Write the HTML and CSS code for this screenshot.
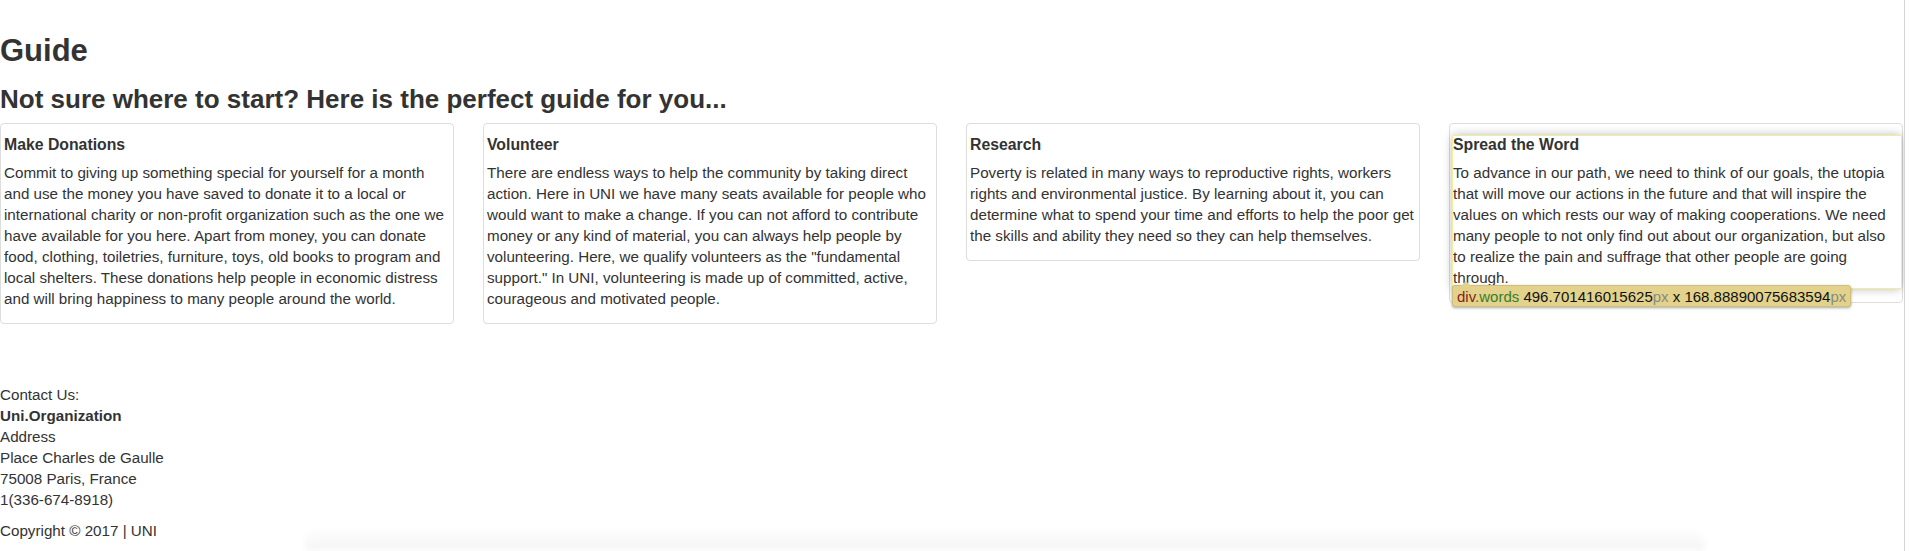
FILE: index.html
```html
<!DOCTYPE html>
<html lang="en">
<head>
<meta charset="utf-8">
<title>Guide</title>
<link rel="stylesheet" href="styles.css">
</head>
<body>
<div class="page">
  <h1 class="title">Guide</h1>
  <h2 class="subtitle">Not sure where to start? Here is the perfect guide for you...</h2>
  <div class="cards">
    <div class="card">
      <div class="words">
        <h5 class="card-title">Make Donations</h5>
        <p class="card-text">Commit to giving up something special for yourself for a month and use the money you have saved to donate it to a local or international charity or non-profit organization such as the one we have available for you here. Apart from money, you can donate food, clothing, toiletries, furniture, toys, old books to program and local shelters. These donations help people in economic distress and will bring happiness to many people around the world.</p>
      </div>
    </div>
    <div class="card">
      <div class="words">
        <h5 class="card-title">Volunteer</h5>
        <p class="card-text">There are endless ways to help the community by taking direct action. Here in UNI we have many seats available for people who would want to make a change. If you can not afford to contribute money or any kind of material, you can always help people by volunteering. Here, we qualify volunteers as the "fundamental support." In UNI, volunteering is made up of committed, active, courageous and motivated people.</p>
      </div>
    </div>
    <div class="card">
      <div class="words">
        <h5 class="card-title">Research</h5>
        <p class="card-text">Poverty is related in many ways to reproductive rights, workers rights and environmental justice. By learning about it, you can determine what to spend your time and efforts to help the poor get the skills and ability they need so they can help themselves.</p>
      </div>
    </div>
    <div class="card card-inspected">
      <div class="words words-highlight">
        <h5 class="card-title">Spread the Word</h5>
        <p class="card-text">To advance in our path, we need to think of our goals, the utopia that will move our actions in the future and that will inspire the values on which rests our way of making cooperations. We need many people to not only find out about our organization, but also to realize the pain and suffrage that other people are going through.</p>
      </div>
      <div class="inspector-tip"><span class="tip-tag">div</span><span class="tip-class">.words</span> 496.701416015625<span class="tip-unit">px</span> x 168.88890075683594<span class="tip-unit">px</span></div>
    </div>
  </div>
  <footer class="footer">
    <div class="contact">
      <div>Contact Us:</div>
      <div class="org">Uni.Organization</div>
      <div>Address</div>
      <div>Place Charles de Gaulle</div>
      <div>75008 Paris, France</div>
      <div>1(336-674-8918)</div>
    </div>
    <div class="copyright">Copyright © 2017 | UNI</div>
  </footer>
  <div class="bottom-shade"></div>
</div>
</body>
</html>
```

FILE: styles.css
```css
html, body {
  margin: 0;
  padding: 0;
  background: #ffffff;
}

body {
  font-family: "Liberation Sans", Arial, Helvetica, sans-serif;
  font-size: 15.2px;
  line-height: 21px;
  color: #333333;
  overflow: hidden;
}

.page {
  position: relative;
  width: 1905px;
  height: 551px;
  border-right: 1px solid #d4d4d4;
  padding-top: 34px;
  box-sizing: border-box;
  overflow: hidden;
}

.title {
  margin: 0 0 17px;
  font-size: 31px;
  line-height: 1.1;
  font-weight: bold;
  color: #333333;
}

.subtitle {
  margin: 0 0 9.5px;
  font-size: 26px;
  line-height: 1.1;
  font-weight: bold;
  color: #333333;
}

.cards {
  display: grid;
  grid-template-columns: repeat(4, 454px);
  column-gap: 29px;
  align-items: start;
}

.card {
  position: relative;
  border: 1px solid #dddddd;
  border-radius: 4px;
  padding: 12px 2px 14px 3px;
  background: #ffffff;
}

.card-title {
  margin: 0 0 8px;
  font-size: 15.8px;
  line-height: 1.1;
  font-weight: bold;
  color: #333333;
}

.card-text {
  margin: 0;
}

.words-highlight {
  position: relative;
  margin: 0 -1px 0 0;
  outline: 1px solid #f4ec9c;
  box-shadow: 0 0 10px rgba(0, 0, 0, 0.32);
  background: #ffffff;
}

.inspector-tip {
  position: absolute;
  left: 2px;
  top: 161px;
  z-index: 2;
  height: 22px;
  padding: 0 4px;
  background: #e2d28c;
  border: 1px solid #cfbf78;
  border-radius: 3px;
  box-shadow: 0 1px 3px rgba(0, 0, 0, 0.35);
  font-size: 15px;
  line-height: 22px;
  color: #111111;
  white-space: nowrap;
  box-sizing: border-box;
}

.inspector-tip::before {
  content: "";
  position: absolute;
  left: 8px;
  top: -5px;
  border-left: 5px solid transparent;
  border-right: 5px solid transparent;
  border-bottom: 5px solid #e2d28c;
}

.tip-tag {
  color: #8a1a1a;
}

.tip-class {
  color: #3a7d2a;
}

.tip-unit {
  color: #8a8a80;
}

.footer {
  margin-top: 60px;
}

.org {
  font-weight: bold;
}

.copyright {
  margin-top: 10px;
}

.bottom-shade {
  position: absolute;
  left: 305px;
  top: 527px;
  width: 1400px;
  height: 24px;
  border-radius: 18px 18px 0 0;
  background: linear-gradient(#ffffff, #f6f6f6 20px);
  filter: blur(3px);
}
```
